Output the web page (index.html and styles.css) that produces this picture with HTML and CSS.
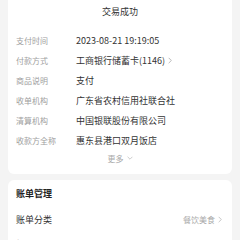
FILE: index.html
```html
<!DOCTYPE html>
<html lang="zh">
<head>
<meta charset="utf-8">
<link rel="stylesheet" href="styles.css">
</head>
<body>
<div class="page">
  <section class="card detail">
    <div class="title">交易成功</div>
    <div class="rows">
      <div class="row"><span class="label">支付时间</span><span class="value">2023-08-21 19:19:05</span></div>
      <div class="row"><span class="label">付款方式</span><span class="value">工商银行储蓄卡(1146)<svg class="chev" viewBox="0 0 6 10" width="4" height="7"><path d="M1 1l4 4-4 4" fill="none" stroke="#999" stroke-width="1"/></svg></span></div>
      <div class="row"><span class="label">商品说明</span><span class="value">支付</span></div>
      <div class="row"><span class="label">收单机构</span><span class="value">广东省农村信用社联合社</span></div>
      <div class="row"><span class="label">清算机构</span><span class="value">中国银联股份有限公司</span></div>
      <div class="row"><span class="label">收款方全称</span><span class="value">惠东县港口双月饭店</span></div>
    </div>
    <div class="more">更多<svg class="down" viewBox="0 0 10 6" width="6" height="4"><path d="M1 1l4 4 4-4" fill="none" stroke="#aaa" stroke-width="1"/></svg></div>
  </section>
  <section class="card manage">
    <div class="head">账单管理</div>
    <div class="mrow"><span class="mlabel">账单分类</span><span class="mvalue">餐饮美食<svg class="chev" viewBox="0 0 6 10" width="4" height="7"><path d="M1 1l4 4-4 4" fill="none" stroke="#aaa" stroke-width="1"/></svg></span></div>
    <div class="mrow"><span class="mlabel">标签和备注</span><span class="mvalue">添加</span></div>
  </section>
</div>
</body>
</html>
```
FILE: styles.css
```css
* { box-sizing: border-box; margin: 0; padding: 0; }
html, body { width: 240px; height: 240px; overflow: hidden; }
body {
  background: #f4f4f4;
  font-family: "Noto Sans CJK SC", "Noto Sans", sans-serif;
  color: #333;
}
.page {
  display: flex;
  flex-direction: column;
  gap: 6px;
  padding: 0 8px;
}
.card {
  background: #fff;
  border-radius: 6px;
}
.detail {
  border-radius: 0 0 6px 6px;
  padding: 5px 8px 8px;
  height: 174px;
}
.title {
  text-align: center;
  font-size: 9px;
  line-height: 14px;
  color: #333;
  margin-bottom: 11px;
}
.rows { display: flex; flex-direction: column; }
.row {
  display: flex;
  align-items: center;
  height: 20px;
}
.label {
  width: 60px;
  font-size: 8px;
  color: #a0a0a0;
}
.value {
  font-size: 9px;
  color: #333;
  display: flex;
  align-items: center;
}
.chev { margin-left: 3px; }
.more {
  display: flex;
  justify-content: center;
  align-items: center;
  gap: 3px;
  font-size: 8px;
  color: #aaa;
  height: 14px;
  margin-top: 1px;
}
.manage {
  padding: 7px 8px 0;
  height: 80px;
}
.head {
  font-size: 9px;
  font-weight: 700;
  line-height: 14px;
  color: #222;
  margin-bottom: 11px;
}
.mrow {
  display: flex;
  justify-content: space-between;
  align-items: center;
  height: 14px;
  margin-bottom: 11px;
}
.mlabel { font-size: 9px; color: #333; }
.mvalue {
  font-size: 8px;
  color: #aaa;
  display: flex;
  align-items: center;
  padding-right: 2px;
}
```
